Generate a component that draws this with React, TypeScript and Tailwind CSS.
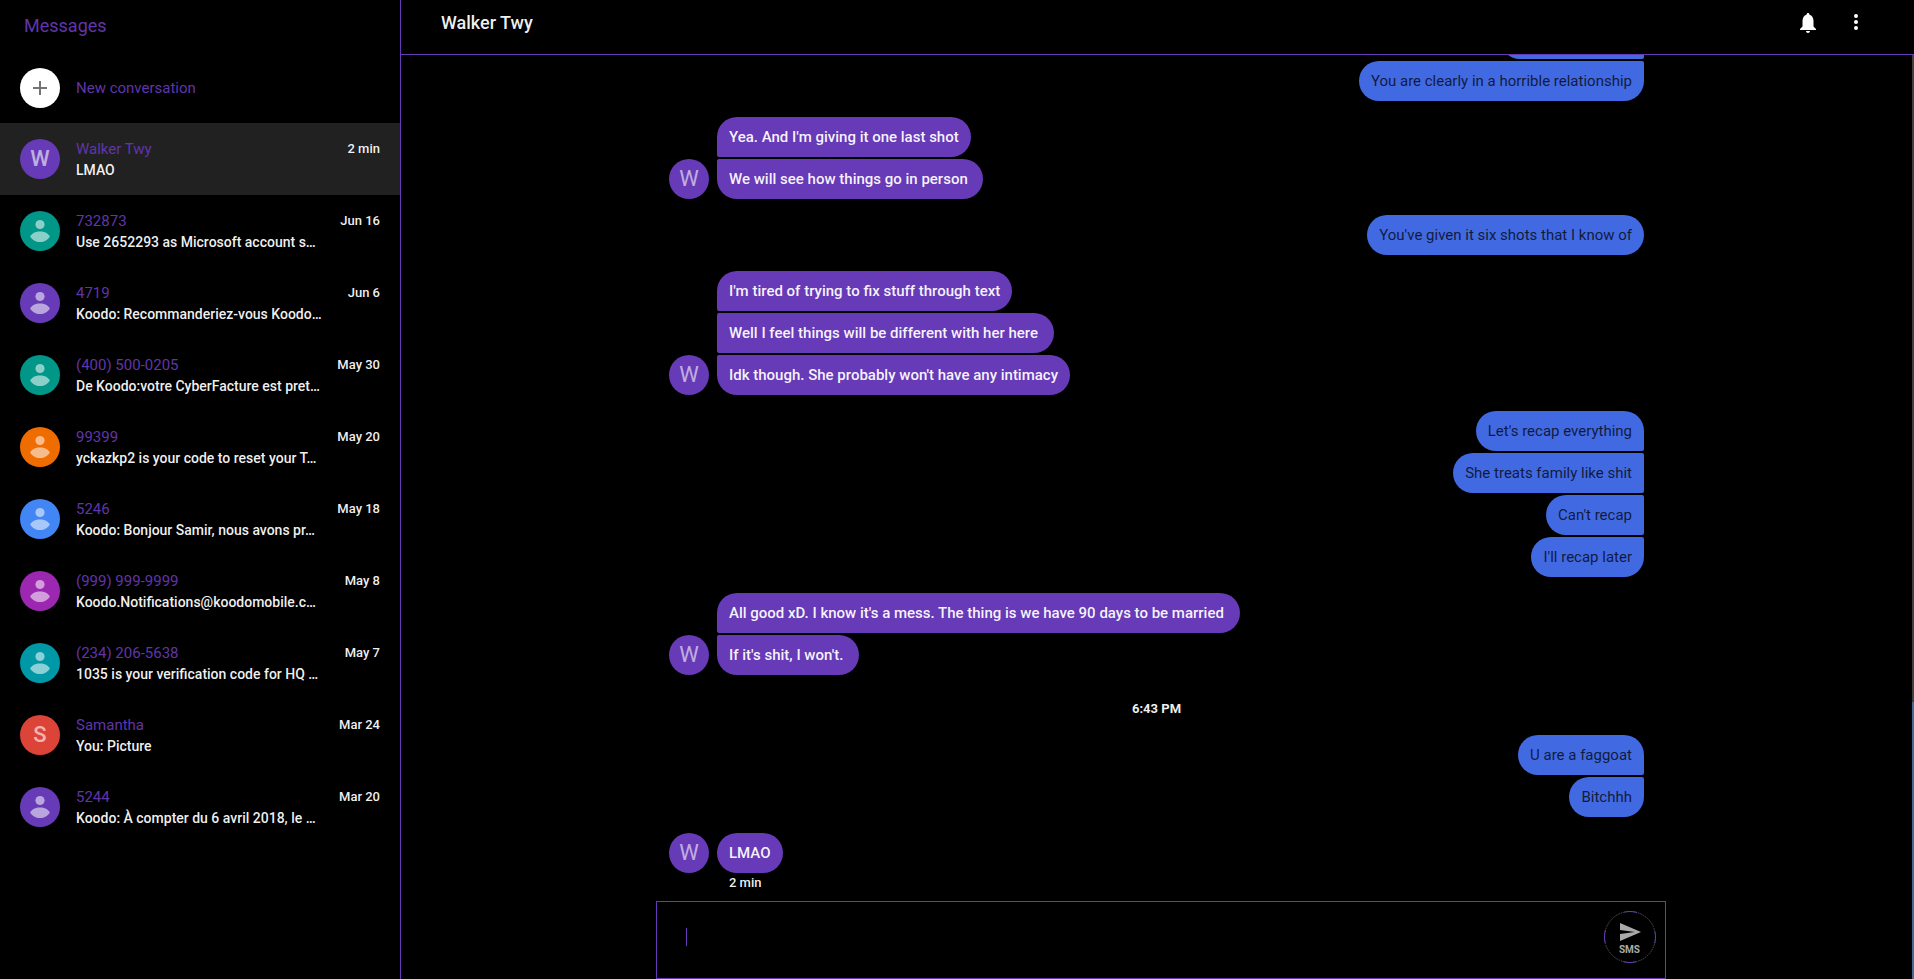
import React from "react";

type Conversation = {
  name: string;
  preview: string;
  date: string;
  color: string;
  letter?: string;
  active?: boolean;
};

const conversations: Conversation[] = [
  { name: "Walker Twy", preview: "LMAO", date: "2 min", color: "bg-[#673ab7]", letter: "W", active: true },
  { name: "732873", preview: "Use 2652293 as Microsoft account s…", date: "Jun 16", color: "bg-[#009688]" },
  { name: "4719", preview: "Koodo: Recommanderiez-vous Koodo…", date: "Jun 6", color: "bg-[#673ab7]" },
  { name: "(400) 500-0205", preview: "De Koodo:votre CyberFacture est pret…", date: "May 30", color: "bg-[#009688]" },
  { name: "99399", preview: "yckazkp2 is your code to reset your T…", date: "May 20", color: "bg-[#ef6c00]" },
  { name: "5246", preview: "Koodo: Bonjour Samir, nous avons pr…", date: "May 18", color: "bg-[#4285f4]" },
  { name: "(999) 999-9999", preview: "Koodo.Notifications@koodomobile.c…", date: "May 8", color: "bg-[#9c27b0]" },
  { name: "(234) 206-5638", preview: "1035 is your verification code for HQ …", date: "May 7", color: "bg-[#0097a7]" },
  { name: "Samantha", preview: "You: Picture", date: "Mar 24", color: "bg-[#db4437]", letter: "S" },
  { name: "5244", preview: "Koodo: À compter du 6 avril 2018, le …", date: "Mar 20", color: "bg-[#673ab7]" },
];

type Group = { kind: "in" | "out"; messages: string[]; meta?: string };
type Entry = Group | { kind: "time"; label: string };

// An empty message is one that has scrolled under the header.
const thread: Entry[] = [
  { kind: "out", messages: ["", "You are clearly in a horrible relationship"] },
  { kind: "in", messages: ["Yea. And I'm giving it one last shot", "We will see how things go in person "] },
  { kind: "out", messages: ["You've given it six shots that I know of"] },
  {
    kind: "in",
    messages: [
      "I'm tired of trying to fix stuff through text",
      "Well I feel things will be different with her here ",
      "Idk though. She probably won't have any intimacy",
    ],
  },
  { kind: "out", messages: ["Let's recap everything", "She treats family like shit", "Can't recap", "I'll recap later"] },
  {
    kind: "in",
    messages: ["All good xD. I know it's a mess. The thing is we have 90 days to be married ", "If it's shit, I won't. "],
  },
  { kind: "time", label: "6:43 PM" },
  { kind: "out", messages: ["U are a faggoat", "Bitchhh"] },
  { kind: "in", messages: ["LMAO"], meta: "2 min" },
];

function Avatar({ color, letter, strong }: { color: string; letter?: string; strong?: boolean }) {
  return (
    <span className={`flex size-10 shrink-0 items-center justify-center rounded-full ${color}`}>
      {letter ? (
        <span className={`text-[22px] leading-10 text-white/60 ${strong ? "font-medium" : ""}`}>{letter}</span>
      ) : (
        <svg viewBox="0 0 40 40" className="size-10" aria-hidden="true">
          <g fill="#fff" fillOpacity="0.55">
            <circle cx="20" cy="13.5" r="4.6" />
            <path d="M20 20.5c-4.6 0-8.3 2-9.8 4.9 1.8 3.5 5.6 5.6 9.8 5.6s8-2.1 9.8-5.6c-1.5-2.9-5.2-4.9-9.8-4.9z" />
          </g>
        </svg>
      )}
    </span>
  );
}

function ConversationRow({ item }: { item: Conversation }) {
  return (
    <li>
      <a
        href="#conversation"
        className={`flex h-[72px] items-center px-5 ${item.active ? "bg-[#212121]" : ""}`}
      >
        <Avatar color={item.color} letter={item.letter} strong />
        <span className="ml-4 flex min-w-0 flex-1 flex-col pt-0.5">
          <span className="flex items-center justify-between">
            <span className="text-[15px] leading-5 text-[#6035ab]">{item.name}</span>
            <span className="text-[13px] leading-5 font-medium text-white/95">{item.date}</span>
          </span>
          <span className="truncate text-sm leading-[22px] font-medium text-white/95">{item.preview}</span>
        </span>
      </a>
    </li>
  );
}

function MessageGroup({ entry }: { entry: Group }) {
  const incoming = entry.kind === "in";
  const last = entry.messages.length - 1;
  return (
    <div className="mt-4">
      <div className={`flex items-end ${incoming ? "justify-start gap-2" : "justify-end"}`}>
        {incoming && <Avatar color="bg-[#673ab7]" letter="W" />}
        <div className={`flex flex-col gap-0.5 ${incoming ? "items-start" : "items-end"}`}>
          {entry.messages.map((text, i) => {
            const top = incoming
              ? i > 0 ? "rounded-tl-[2px]" : ""
              : i > 0 ? "rounded-tr-[2px]" : "";
            const bottom = incoming
              ? i < last ? "rounded-bl-[2px]" : ""
              : i < last ? "rounded-br-[2px]" : "";
            return (
              <p
                key={i}
                className={`h-10 rounded-[20px] px-3 py-2.5 text-[15px] leading-5 whitespace-pre ${
                  incoming ? "bg-[#673ab7] font-medium text-white/95" : "bg-[#4169e1] text-black/75"
                } ${text ? "" : "w-36"} ${top} ${bottom}`}
              >
                {text}
              </p>
            );
          })}
        </div>
      </div>
      {entry.meta && (
        <p className="pl-15 text-[13px] leading-5 font-medium text-white/95">{entry.meta}</p>
      )}
    </div>
  );
}

export default function App() {
  return (
    <div className="flex h-screen overflow-hidden bg-black font-[Roboto,sans-serif]">
      <aside className="flex w-[401px] shrink-0 flex-col border-r border-[#673ab7]">
        <h1 className="px-6 pt-3 text-lg leading-7 text-[#6035ab]">Messages</h1>
        <button type="button" className="mt-3 flex h-[71px] items-center gap-4 px-5 text-left">
          <span className="flex size-10 items-center justify-center rounded-full bg-white">
            <svg viewBox="0 0 24 24" className="size-6" aria-hidden="true">
              <path fill="#757575" d="M19 13h-6v6h-2v-6H5v-2h6V5h2v6h6z" />
            </svg>
          </span>
          <span className="text-[15px] leading-5 text-[#6035ab]">New conversation</span>
        </button>
        <nav aria-label="Conversations">
          <ul>
            {conversations.map((item) => (
              <ConversationRow key={item.name} item={item} />
            ))}
          </ul>
        </nav>
      </aside>

      <main className="flex min-w-0 flex-1 flex-col">
        <header className="flex h-[55px] shrink-0 items-start justify-between border-b border-[#673ab7] pt-2.5 pr-[46px] pl-10">
          <h2 className="text-lg leading-[26px] font-medium text-white/95">Walker Twy</h2>
          <div className="flex gap-6">
            <button type="button" aria-label="Notifications">
              <svg viewBox="0 0 24 24" className="size-6" aria-hidden="true">
                <path
                  fill="#fff"
                  d="M12 23c1.1 0 2-.9 2-2h-4c0 1.1.9 2 2 2zm5.500-6.500v-5.500c0-3.070-1.400-5.640-4-6.320V4.500c0-.83-.67-1.500-1.500-1.500s-1.500.67-1.500 1.500v.18C7.900 5.360 6.500 7.920 6.500 11v5.500L4 19v1h16v-1l-2.500-2.500z"
                />
              </svg>
            </button>
            <button type="button" aria-label="More options">
              <svg viewBox="0 0 24 24" className="size-6" aria-hidden="true">
                <g fill="#fff">
                  <circle cx="12" cy="6" r="2" />
                  <circle cx="12" cy="12" r="2" />
                  <circle cx="12" cy="18" r="2" />
                </g>
              </svg>
            </button>
          </div>
        </header>

        <div className="flex min-h-0 flex-1">
          <div className="flex min-w-0 flex-1 flex-col">
            <section
              aria-label="Conversation"
              className="mx-auto flex min-h-0 w-full max-w-[975px] flex-1 flex-col justify-end overflow-hidden pb-2"
            >
              {thread.map((entry, i) =>
                entry.kind === "time" ? (
                  <p key={i} className="mt-6 text-center text-[13px] leading-5 font-bold text-white/95">
                    {entry.label}
                  </p>
                ) : (
                  <MessageGroup key={i} entry={entry} />
                ),
              )}
            </section>
            <div className="pl-2">
              <form
                className="mx-auto flex h-[78px] w-full max-w-[1010px] items-center border border-[#673ab7] pr-[9px] pb-1.5 pl-[29px]"
                onSubmit={(e) => e.preventDefault()}
              >
                <span className="h-[18px] w-px bg-[#673ab7]" />
                <input
                  aria-label="Text message"
                  className="min-w-0 flex-1 bg-transparent text-[15px] leading-5 text-white caret-transparent outline-none"
                />
                <button
                  type="submit"
                  aria-label="Send SMS"
                  className="relative flex size-[52px] shrink-0 flex-col items-center rounded-full pt-[9px] text-[#aaaaaa]"
                >
                  <svg viewBox="0 0 52 52" className="absolute inset-0 size-[52px]" fill="none" aria-hidden="true">
                    <circle cx="26" cy="26" r="25.5" stroke="#555" strokeDasharray="1.5 1" />
                    <circle
                      cx="26"
                      cy="26"
                      r="25.5"
                      stroke="#673ab7"
                      strokeDasharray="13 27.055"
                      strokeDashoffset="6.5"
                    />
                  </svg>
                  <svg viewBox="0 0 24 24" className="size-6" aria-hidden="true">
                    <path fill="currentColor" d="M2.01 21L23 12 2.01 3 2 10l15 2-15 2z" />
                  </svg>
                  <span className="text-[10px] leading-3 font-bold">SMS</span>
                </button>
              </form>
            </div>
          </div>
          <div className="flex w-0.5 flex-col bg-[#424242]">
            <div className="mt-auto h-[30%] bg-[#466a94]" />
          </div>
        </div>
      </main>
    </div>
  );
}
